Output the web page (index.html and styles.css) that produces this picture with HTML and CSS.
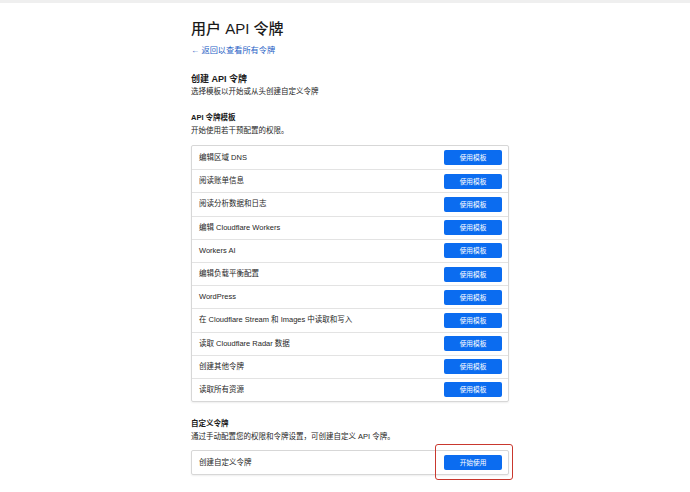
FILE: index.html
```html
<!DOCTYPE html>
<html>
<head>
  <meta charset="utf-8">
  <title>用户 API 令牌</title>
  <link rel="stylesheet" href="styles.css">
</head>

<body>
  <div class="topbar"></div>

  <main class="page">
    <h1 class="page-title">用户 API 令牌</h1>
    <a class="back-link" href="#">← 返回以查看所有令牌</a>

    <section class="create">
      <h2 class="section-title">创建 API 令牌</h2>
      <p class="section-desc">选择模板以开始或从头创建自定义令牌</p>

      <h3 class="group-title">API 令牌模板</h3>
      <p class="group-desc">开始使用若干预配置的权限。</p>

      <ul class="template-list">
        <li class="template-list__item"><span>编辑区域 DNS</span><button class="btn">使用模板</button></li>
        <li class="template-list__item"><span>阅读账单信息</span><button class="btn">使用模板</button></li>
        <li class="template-list__item"><span>阅读分析数据和日志</span><button class="btn">使用模板</button></li>
        <li class="template-list__item"><span>编辑 Cloudflare Workers</span><button class="btn">使用模板</button></li>
        <li class="template-list__item"><span>Workers AI</span><button class="btn">使用模板</button></li>
        <li class="template-list__item"><span>编辑负载平衡配置</span><button class="btn">使用模板</button></li>
        <li class="template-list__item"><span>WordPress</span><button class="btn">使用模板</button></li>
        <li class="template-list__item"><span>在 Cloudflare Stream 和 Images 中读取和写入</span><button class="btn">使用模板</button></li>
        <li class="template-list__item"><span>读取 Cloudflare Radar 数据</span><button class="btn">使用模板</button></li>
        <li class="template-list__item"><span>创建其他令牌</span><button class="btn">使用模板</button></li>
        <li class="template-list__item"><span>读取所有资源</span><button class="btn">使用模板</button></li>
      </ul>

      <h3 class="group-title group-title--custom">自定义令牌</h3>
      <p class="group-desc">通过手动配置您的权限和令牌设置，可创建自定义 API 令牌。</p>

      <ul class="template-list template-list--custom">
        <li class="template-list__item">
          <span>创建自定义令牌</span>
          <span class="highlight"><button class="btn">开始使用</button></span>
        </li>
      </ul>
    </section>
  </main>
</body>

</html>
```

FILE: styles.css
```css
* {
  box-sizing: border-box;
}

html,
body {
  min-height: 100%;
}

body {
  margin: 0;
  font-family: "Liberation Sans", "Noto Sans CJK SC", sans-serif;
  font-size: 7.5px;
  line-height: 12px;
  color: #262626;
  background-color: #ffffff;
}

.topbar {
  height: 3px;
  background-color: #efefef;
}

.page {
  width: 328px;
  margin: 0 auto;
  padding: 0 0 18px 10px;
}

.page-title {
  margin: 16px 0 0;
  font-size: 15px;
  line-height: 19px;
  font-weight: 500;
  color: #1a1a1a;
}

.back-link {
  display: block;
  margin-top: 7px;
  font-size: 8.2px;
  line-height: 12px;
  color: #2b63c6;
  text-decoration: none;
}

.section-title {
  margin: 16px 0 0;
  font-size: 9px;
  line-height: 12px;
  font-weight: 600;
  color: #1a1a1a;
}

.section-desc,
.group-desc {
  margin: 1px 0 0;
}

.group-title {
  margin: 14px 0 0;
  font-size: 7.5px;
  line-height: 12px;
  font-weight: 700;
  color: #1a1a1a;
}

.group-title--custom {
  margin-top: 16px;
}

.template-list {
  list-style: none;
  margin: 8px 0 0;
  padding: 0;
  width: 318px;
  border: 1px solid #d7d7d7;
  border-radius: 2px;
  box-shadow: 0 1px 2px rgba(0, 0, 0, 0.07);
}

.template-list--custom {
  margin-top: 7px;
}

.template-list__item {
  height: 23.2px;
  display: flex;
  align-items: center;
  justify-content: space-between;
  padding: 0 6px 0 7px;
}

.template-list__item + .template-list__item {
  border-top: 1px solid #e3e3e3;
}

.btn {
  width: 58px;
  height: 15px;
  padding: 0;
  border: none;
  border-radius: 2px;
  background-color: #0b6cf0;
  color: #ffffff;
  font-family: inherit;
  font-size: 6.7px;
  line-height: 15px;
  cursor: pointer;
}

.highlight {
  position: relative;
  display: flex;
}

.highlight::after {
  content: "";
  position: absolute;
  left: -9px;
  right: -11px;
  top: -11px;
  bottom: -10px;
  border: 1.5px solid #c9382e;
  border-radius: 3px;
}
```
